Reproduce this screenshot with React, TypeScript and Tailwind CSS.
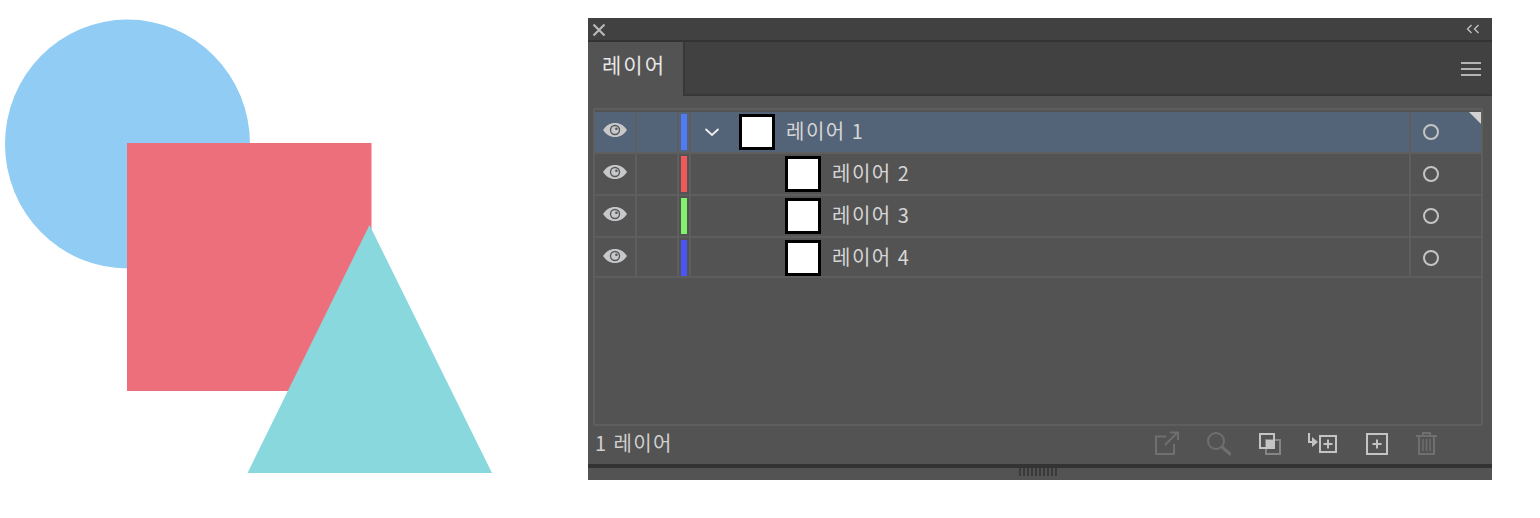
import { ReactNode } from 'react';

const font = { kr: "font-['Noto_Sans_CJK_KR','Noto_Sans',sans-serif]" };

const layers = [
    { name: '레이어 1', color: 'bg-[#4f7bf5]', selected: true, last: false },
    { name: '레이어 2', color: 'bg-[#ee5a5a]', selected: false, last: false },
    { name: '레이어 3', color: 'bg-[#80f46c]', selected: false, last: false },
    { name: '레이어 4', color: 'bg-[#4a55f5]', selected: false, last: true },
];

function Eye() {
    return (
        <svg width="24" height="14" viewBox="0 0 24 14">
            <path d="M0 7C3 2.5 7 0 12 0S21 2.5 24 7C21 11.5 17 14 12 14S3 11.5 0 7Z" fill="#c8c8c8" />
            <circle cx="12" cy="7" r="5.2" fill="#53585e" />
            <circle cx="12" cy="7" r="3.8" fill="#c8c8c8" />
            <circle cx="13.4" cy="5.8" r="1.3" fill="#53585e" />
        </svg>
    );
}

function LayerRow({ name, color, selected, last }: { name: string; color: string; selected: boolean; last: boolean }) {
    return (
        <div className={`relative flex shrink-0 items-stretch ${last ? 'h-[38px]' : 'h-10'} ${selected ? 'bg-[#536478]' : ''}`}>
            <div className={`flex w-[42px] items-center justify-center border-r-2 border-[#5e5e5e] ${last ? 'pb-[2px]' : 'pb-[4px]'}`}><Eye /></div>
            <div className="w-[42px] border-r-2 border-[#5e5e5e]" />
            <div className={`flex w-[12px] justify-center border-r-2 border-[#5e5e5e] pt-[2px] ${last ? '' : 'pb-[2px]'}`}>
                <div className={`w-[6px] ${color}`} />
            </div>
            <div className="flex flex-1 items-start pt-[2px]">
                {selected ? (
                    <div className="flex h-[36px] items-center">
                        <svg width="16" height="10" viewBox="0 0 16 10" className="ml-[13px] mr-[19px]">
                            <path d="M1.5 2L8 8L14.5 2" fill="none" stroke="#f0f0f0" strokeWidth="1.8" />
                        </svg>
                    </div>
                ) : (
                    <div className="w-[94px]" />
                )}
                <div className="h-[36px] w-[36px] border-[3px] border-black bg-white" />
                <div className="flex h-[34px] items-center">
                    <span className={`ml-[11px] text-[20px] leading-none tracking-[1.5px] text-[#d6d6d6] ${font.kr}`}>{name}</span>
                </div>
            </div>
            <div className={`flex w-[72px] items-center justify-start border-l-2 border-[#5e5e5e] pl-[12px] ${last ? 'pt-[2px]' : ''}`}>
                <div className="h-[16px] w-[16px] rounded-full border-2 border-[#c4c4c4]" />
            </div>
            {selected && (
                <svg width="12" height="12" viewBox="0 0 12 12" className="absolute right-0 top-0">
                    <path d="M0 0H12V12Z" fill="#d2d2d2" />
                </svg>
            )}
        </div>
    );
}

function RowDivider() {
    return <div className="h-[2px] shrink-0 bg-[#5e5e5e]" />;
}

function FooterIcon({ children, width, className }: { children: ReactNode; width: number; className?: string }) {
    return (
        <svg width={width} height="26" viewBox={`0 0 ${width} 26`} fill="none" className={className}>
            {children}
        </svg>
    );
}

export default function App() {
    return (
        <div className="flex h-[518px] w-[1540px] bg-white pt-[18px]">
            <div className="w-[588px] shrink-0">
                {/* artwork */}
                <svg width="588" height="480" viewBox="0 18 588 480">
                    <ellipse cx="127.5" cy="144" rx="122.5" ry="124.5" fill="#90ccf4" />
                    <rect x="127" y="143" width="244.5" height="248" fill="#ee6f7c" />
                    <path d="M369.5 225L492 473H247.5Z" fill="#88d8dd" />
                </svg>
            </div>

            {/* layers panel */}
            <div className="flex h-[462px] w-[904px] flex-col bg-[#535353]">
                <div className="flex h-[24px] shrink-0 items-center justify-between border-b-2 border-[#333333] bg-[#414141] pl-[4px] pr-[12px]">
                    <svg width="14" height="14" viewBox="0 0 14 14" className="mt-[2px]">
                        <path d="M1.5 1.5L12.5 12.5M12.5 1.5L1.5 12.5" stroke="#b8b8b8" strokeWidth="2.2" />
                    </svg>
                    <svg width="14" height="10" viewBox="0 0 14 10">
                        <path d="M5.5 1L1.5 5L5.5 9M12.5 1L8.5 5L12.5 9" fill="none" stroke="#c4c4c4" strokeWidth="1.3" />
                    </svg>
                </div>

                <div className="flex h-[54px] shrink-0 items-stretch">
                    <div className={`flex w-[95px] items-center justify-start bg-[#535353] pb-[10px] pl-[14px] text-[21px] leading-none tracking-[2px] text-[#e6e6e6] ${font.kr}`}>
                        레이어
                    </div>
                    <div className="flex flex-1 items-center justify-end border-b-2 border-l-2 border-[#383838] bg-[#414141] pr-[11px] pt-[2px]">
                        <div className="flex w-[20px] flex-col gap-[4px]">
                            <div className="h-[2px] bg-[#b4b4b4]" />
                            <div className="h-[2px] bg-[#b4b4b4]" />
                            <div className="h-[2px] bg-[#b4b4b4]" />
                        </div>
                    </div>
                </div>

                <div className="ml-[5px] mr-[9px] mt-[12px] flex h-[318px] flex-col rounded-[2px] border-2 border-[#5e5e5e] pt-[2px]">
                    {layers.map((layer) => (
                        <div key={layer.name} className="contents">
                            <LayerRow {...layer} />
                            <RowDivider />
                        </div>
                    ))}
                </div>

                <div className="flex h-[38px] shrink-0 items-center justify-between pb-[4px] pl-[7px] pr-[55px]">
                    <span className={`text-[20px] leading-none tracking-[1.4px] text-[#d0d0d0] ${font.kr}`}>1 레이어</span>
                    <div className="flex items-center gap-[28px]">
                        <FooterIcon width={24}>
                            <path d="M11 6.5H1V24H19V14" stroke="#6f6f6f" strokeWidth="2" />
                            <path d="M10 15L22 3M15 2.5H23V10" stroke="#6f6f6f" strokeWidth="2" />
                        </FooterIcon>
                        <FooterIcon width={24}>
                            <circle cx="9" cy="11" r="8" stroke="#6f6f6f" strokeWidth="2" />
                            <path d="M15 17L23 24" stroke="#6f6f6f" strokeWidth="3" strokeLinecap="round" />
                        </FooterIcon>
                        <FooterIcon width={22}>
                            <rect x="7" y="10" width="14" height="14" stroke="#858585" strokeWidth="2" />
                            <rect x="1" y="4" width="14" height="14" stroke="#c4c4c4" strokeWidth="2" />
                            <rect x="7" y="10" width="8" height="8" fill="#c4c4c4" />
                        </FooterIcon>
                        <FooterIcon width={30} className="-ml-[2px] mr-[1px]">
                            <path d="M2 3V12H6" stroke="#c4c4c4" strokeWidth="2" />
                            <path d="M5 7L11 12L5 17Z" fill="#c4c4c4" />
                            <rect x="13" y="6" width="16" height="16" stroke="#c4c4c4" strokeWidth="2" />
                            <path d="M21 9.5V18.5M16.5 14H25.5" stroke="#c4c4c4" strokeWidth="2" />
                        </FooterIcon>
                        <FooterIcon width={22}>
                            <rect x="1" y="4" width="20" height="20" stroke="#c4c4c4" strokeWidth="2" />
                            <path d="M11 9.5V18.5M6.5 14H15.5" stroke="#c4c4c4" strokeWidth="2" />
                        </FooterIcon>
                        <FooterIcon width={21}>
                            <path d="M0 6H21M7 5V3H14V5" stroke="#6f6f6f" strokeWidth="2" />
                            <path d="M3 6H18V24H3Z" stroke="#6f6f6f" strokeWidth="2" />
                            <path d="M7 9V21M10.5 9V21M14 9V21" stroke="#6f6f6f" strokeWidth="1.5" />
                        </FooterIcon>
                    </div>
                </div>

                <div className="h-[4px] shrink-0 bg-[#333333]" />
                <div className="flex flex-1 justify-center gap-[2px] pr-[4px]">
                    {Array.from({ length: 10 }).map((_, i) => (
                        <div key={i} className="h-[8px] w-[2px] bg-[#3a3a3a]" />
                    ))}
                </div>
            </div>
        </div>
    );
}
